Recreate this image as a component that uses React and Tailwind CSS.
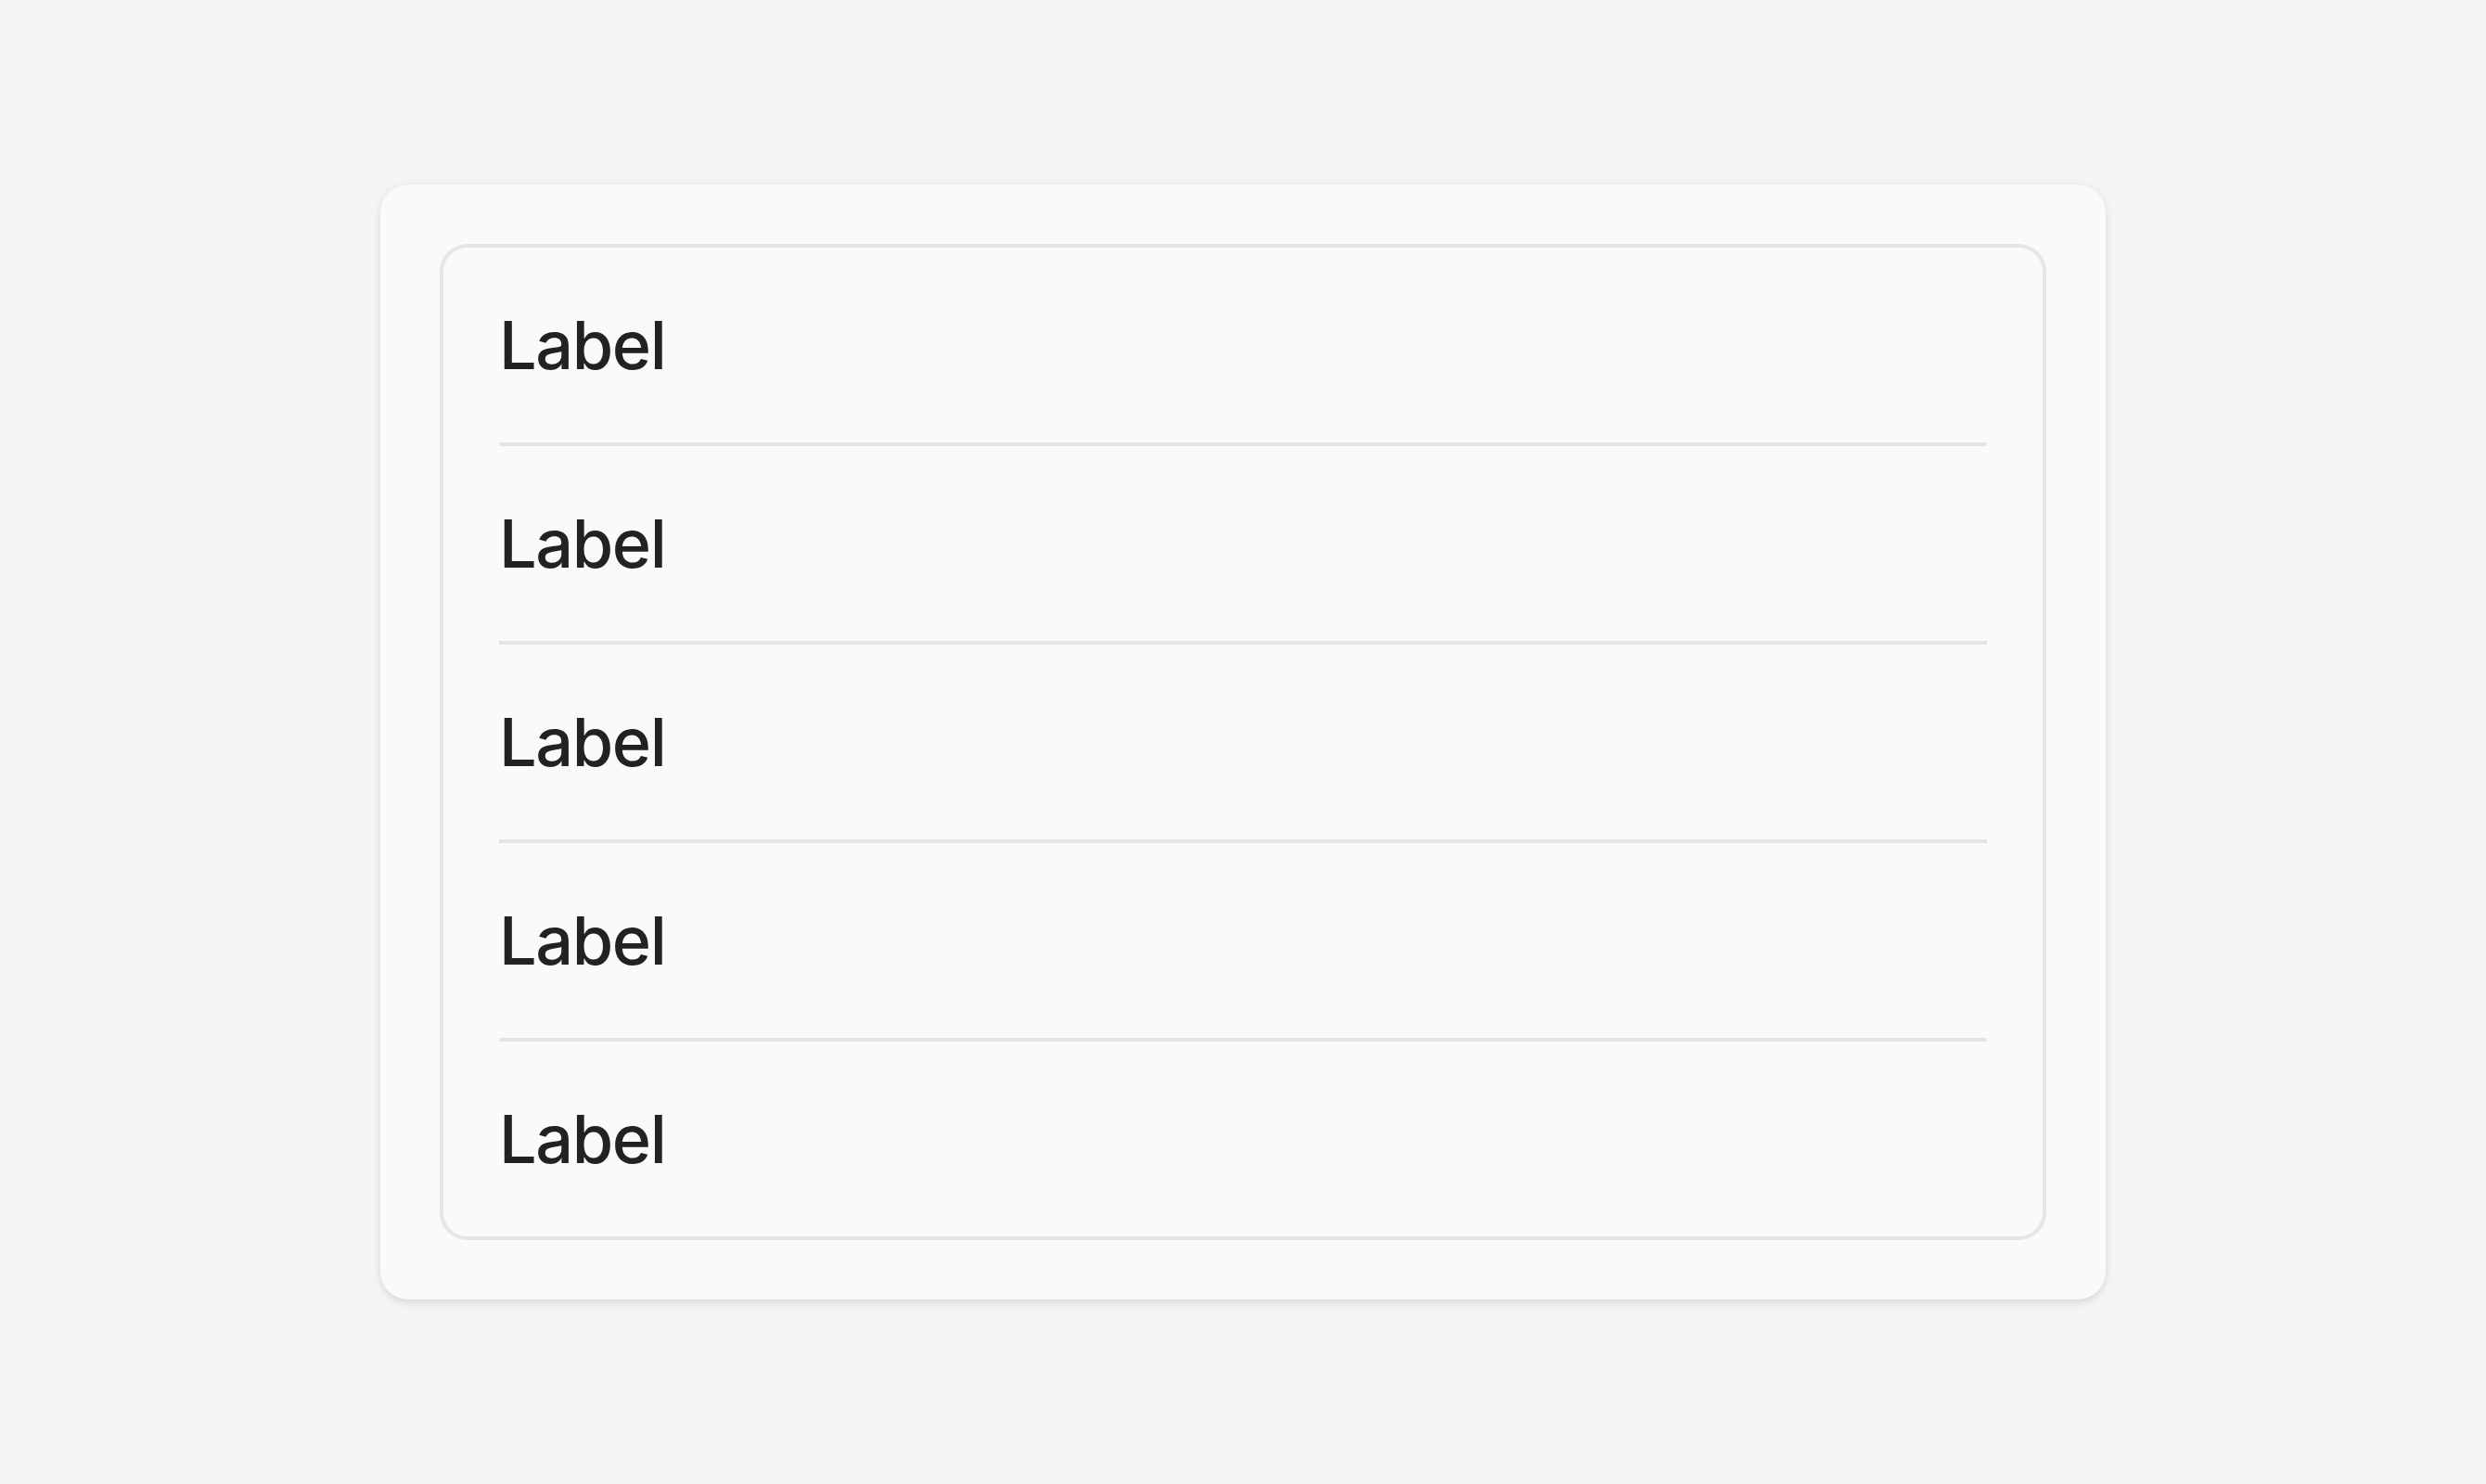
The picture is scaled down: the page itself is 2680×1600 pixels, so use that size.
const rows = ["Label", "Label", "Label", "Label", "Label"];

export default function App() {
  return (
    <div className="min-h-screen w-full flex items-center justify-center bg-[#f4f4f4]" style={{ fontFamily: "Inter, 'Liberation Sans', sans-serif" }}>
      <div className="w-[1860px] rounded-[30px] bg-[#fafafa] p-[64px] shadow-[0_3px_8px_rgba(0,0,0,0.12)]">
        <div className="rounded-[30px] border-[4px] border-[#e5e5e6] px-[60px]">
          {rows.map((label, i) => (
            <div
              key={i}
              className={
                i < rows.length - 1
                  ? "h-[214px] flex items-center border-b-[4px] border-[#e5e5e6]"
                  : "h-[210px] flex items-center"
              }
            >
              <span className="text-[72px] font-medium tracking-[-0.02em] leading-none text-[#212223]">{label}</span>
            </div>
          ))}
        </div>
      </div>
    </div>
  );
}
